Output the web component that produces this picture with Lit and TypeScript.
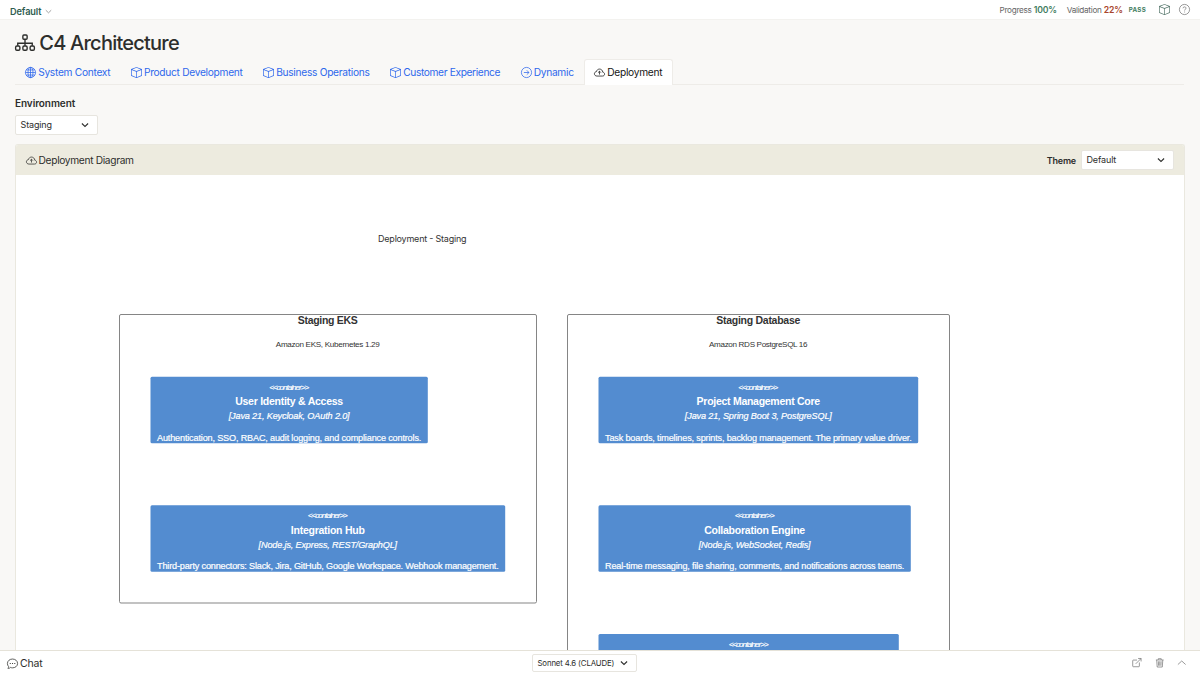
import { LitElement, html, css, svg } from "lit";
import { customElement } from "lit/decorators.js";

const glyphs: Record<string, unknown> = {
  box: svg`<path fill="currentColor" d="M8.186 1.113a.5.5 0 0 0-.372 0L1.846 3.5 8 5.961 14.154 3.5zM15 4.239l-6.5 2.6v7.922l6.5-2.6V4.24zM7.5 14.762V6.838L1 4.239v7.923zM7.443.184a1.5 1.5 0 0 1 1.114 0l7.129 2.852A.5.5 0 0 1 16 3.5v8.662a1 1 0 0 1-.629.928l-7.185 2.874a.5.5 0 0 1-.372 0L.63 13.09a1 1 0 0 1-.63-.928V3.5a.5.5 0 0 1 .314-.464z"/>`,
  globe: svg`<circle cx="8" cy="8" r="7.4"/><ellipse cx="8" cy="8" rx="3.6" ry="7.4"/><path d="M8 .6v14.8M.6 8h14.8M1.7 4.3h12.6M1.7 11.7h12.6"/>`,
  arrow: svg`<circle cx="8" cy="8" r="7.4"/><path d="M4.2 8h7.4M8.4 4.8 11.6 8l-3.2 3.2"/>`,
  cloud: svg`<path d="M4.3 13.2h8c1.8 0 3.1-1.2 3.1-2.8 0-1.5-1.1-2.7-2.7-2.9C12.5 4.8 10.5 3 8 3 5.9 3 4 4.4 3.7 6.6 1.8 6.9.6 8.2.6 9.9c0 1.9 1.6 3.3 3.7 3.3z"/><path d="M8 11V6.3M5.9 8.2 8 6.1l2.1 2.1"/>`,
  tree: svg`<rect x="6.3" y="1.6" width="3.4" height="3.4" rx=".8"/><path d="M8 5v5.2M2.2 10.2V8.2h11.6v2"/><rect x=".5" y="10.4" width="3.4" height="3.4" rx="1"/><rect x="6.3" y="10.4" width="3.4" height="3.4" rx="1"/><rect x="12.1" y="10.4" width="3.4" height="3.4" rx="1"/>`,
  help: svg`<circle cx="8" cy="8" r="7.4"/><path d="M5.8 6.2C5.9 4.9 6.8 4.2 8 4.2c1.3 0 2.2.8 2.2 1.9 0 1.5-2.1 1.7-2.1 3.4M8.1 11v1.3"/>`,
  chat: svg`<path d="M3.5 14.8c-.7.3-1.6.4-2.2.3.7-.8 1-1.7 1-2.7C1.2 11.2.6 9.7.6 8 .6 4.3 3.9 1.5 8 1.5S15.4 4.3 15.4 8 12.1 14.3 8 14.3c-1.2 0-2.2-.2-3.1-.6z"/><path stroke-width="1.7" stroke-linecap="round" d="M4.7 8h.1M8 8h.1M11.3 8h.1"/>`,
  chevron: svg`<path d="m1.8 5 6.2 6 6.2-6"/>`,
  up: svg`<path d="m1.5 11 6.5-6 6.5 6"/>`,
  open: svg`<path d="M8.5 3.5H2.2c-.6 0-1 .4-1 1v9.2c0 .6.4 1 1 1h9.2c.6 0 1-.4 1-1V7.5M10.3.8h5v5M15.2.9 6.3 9.8"/>`,
  trash: svg`<path d="M1.5 3.3h13M5.5 3V1.2h5V3M2.9 3.5l.8 11.7h8.6l.8-11.7M5.7 5.5l.3 7.5M8 5.5V13M10.3 5.5 10 13"/>`,
};

const icon = (name: string, cls: string) =>
  html`<svg class="icon ${cls}" viewBox="0 0 16 16" aria-hidden="true">${glyphs[name]}</svg>`;

const tabs = [
  { icon: "globe", label: "System Context", cls: "" },
  { icon: "box", label: "Product Development", cls: "" },
  { icon: "box", label: "Business Operations", cls: "" },
  { icon: "box", label: "Customer Experience", cls: "tight" },
  { icon: "arrow", label: "Dynamic", cls: "" },
  { icon: "cloud", label: "Deployment", cls: "active" },
];

interface Box { x: number; y: number; w: number; name: string; nameW: number; tech: string; techW: number; desc: string }

const boxes: Box[] = [
  { x: 150.5, y: 376.7, w: 277.3, name: "User Identity & Access", nameW: 108, tech: "[Java 21, Keycloak, OAuth 2.0]", techW: 121, desc: "Authentication, SSO, RBAC, audit logging, and compliance controls." },
  { x: 150.5, y: 505.3, w: 354.7, name: "Integration Hub", nameW: 74, tech: "[Node.js, Express, REST/GraphQL]", techW: 138.5, desc: "Third-party connectors: Slack, Jira, GitHub, Google Workspace. Webhook management." },
  { x: 598.5, y: 376.7, w: 319.7, name: "Project Management Core", nameW: 123.5, tech: "[Java 21, Spring Boot 3, PostgreSQL]", techW: 147, desc: "Task boards, timelines, sprints, backlog management. The primary value driver." },
  { x: 598.5, y: 505.3, w: 312.3, name: "Collaboration Engine", nameW: 101, tech: "[Node.js, WebSocket, Redis]", techW: 112, desc: "Real-time messaging, file sharing, comments, and notifications across teams." },
  { x: 598.5, y: 634, w: 300.3, name: "", nameW: 0, tech: "", techW: 0, desc: "" },
];

const label = (x: number, y: number, cls: string, text: string, width: number) =>
  svg`<text x=${x} y=${y} class=${cls} textLength=${width} lengthAdjust="spacing">${text}</text>`;

@customElement("app-root")
export class AppRoot extends LitElement {
  static styles = css`
    :host { display: flex; flex-direction: column; width: 1200px; height: 675px; overflow: hidden; box-sizing: border-box; background: #f9f8f6; color: #2d2e2c; font-family: Inter, "Liberation Sans", sans-serif; font-size: 10px; }
    * { box-sizing: border-box; }
    .icon { display: block; flex: none; width: 11px; height: 11px; fill: none; stroke: currentColor; stroke-width: 1.1; overflow: visible; }
    .icon path[fill] { stroke: none; }
    .topbar { display: flex; align-items: center; flex: none; height: 20px; padding: 0 10px; background: #fff; border-bottom: 1px solid #f3f2ef; white-space: nowrap; }
    .project { display: flex; align-items: center; gap: 4px; color: #2f5d50; font-size: 9.2px; font-weight: 600; letter-spacing: -.1px; padding-top: 3px; }
    .project .icon { width: 7px; height: 7px; stroke: #888; stroke-width: 1.8; }
    .stats { display: flex; align-items: center; margin-left: auto; color: #666; font-size: 8.2px; letter-spacing: -.3px; }
    .stats b { font-weight: 600; font-size: 8.7px; margin-left: 2.3px; letter-spacing: -.25px; }
    .good { color: #3f7d60; }
    .bad { color: #a8452c; }
    .validation { margin-left: 10px; }
    .pass { margin-left: 6px; font-size: 6.2px; font-weight: 700; letter-spacing: .3px; }
    .stats .box { margin-left: 13px; color: #55766b; }
    .stats .help { margin-left: 9px; color: #777; }
    .title { display: flex; align-items: center; flex: none; gap: 4.3px; height: 39px; margin: 0; padding: 6px 15px 0; font-size: 20px; font-weight: 500; letter-spacing: -.77px; }
    .title .icon { width: 20px; height: 20px; stroke-width: 1.1; }
    .tabs { display: flex; flex: none; height: 26px; margin: 0 16px 0 15px; border-bottom: 1px solid #eeece8; white-space: nowrap; }
    .tab { display: flex; align-items: center; gap: 1.8px; height: 26px; padding: 0 9.4px 1px; border: 1px solid transparent; border-bottom: 0; color: #2e68ec; font-size: 10.2px; letter-spacing: -.29px; }
    .tight { letter-spacing: -.36px; }
    .active { background: #fff; border-color: #eeece8; border-radius: 3px 3px 0 0; color: #151515; }
    .env { display: flex; flex-direction: column; flex: none; gap: 5px; padding: 12px 15px 9px; align-items: flex-start; height: 59px; }
    .env-label { font-size: 10px; line-height: 13px; font-weight: 600; letter-spacing: -.08px; }
    .select { display: flex; align-items: center; justify-content: space-between; height: 20px; padding: 0 8px 1px 4.5px; border: 1px solid #e7e5df; border-radius: 2px; background: #fff; font-size: 9px; letter-spacing: -.13px; white-space: nowrap; }
    .select .icon { width: 8px; height: 8px; stroke-width: 2.1; }
    .env .select { width: 83px; }
    .card { display: flex; flex-direction: column; flex: 1; min-height: 0; margin: 0 15px; border: 1px solid #eae8df; border-bottom: 0; border-radius: 3px 3px 0 0; background: #fff; overflow: hidden; }
    .head { display: flex; align-items: center; flex: none; height: 30px; padding: 0 10px; background: #edebdf; }
    .head-title { display: flex; align-items: center; gap: 1.6px; font-size: 10.2px; letter-spacing: -.33px; }
    .theme { margin-left: auto; margin-right: 5px; font-size: 9px; font-weight: 600; letter-spacing: -.2px; }
    .head .select { width: 93px; }
    .canvas { display: block; width: 1168px; height: 475px; flex: none; font-family: "Liberation Sans", Arial, sans-serif; }
    .canvas text { text-anchor: middle; fill: #333; }
    .canvas .caption { font: 9px Inter, sans-serif; }
    .node-title { font-size: 10.5px; font-weight: 700; }
    .node-tech { font-size: 8.1px; }
    .frame { fill: none; stroke: #858585; stroke-width: 1; }
    .container { fill: #538cd0; }
    .canvas .stereo { fill: #fff; font-size: 8.1px; font-style: italic; stroke: #fff; stroke-width: .15; }
    .canvas .name { fill: #fff; font-size: 10.5px; font-weight: 700; }
    .canvas .tech { fill: #fff; font-size: 9.1px; font-style: italic; stroke: #fff; stroke-width: .2; }
    .canvas .desc { fill: #fff; font-size: 9.1px; stroke: #fff; stroke-width: .2; }
    .chatbar { display: grid; grid-template-columns: 532px 105px 1fr; align-items: center; flex: none; height: 25px; padding: 0 13.5px 0 0; background: #fff; border-top: 1px solid #e5e2d8; }
    .chat { display: flex; align-items: center; gap: 2px; padding-left: 7px; font-size: 10.5px; letter-spacing: -.2px; }
    .model { font-size: 7.8px; height: 18px; }
    .actions { display: flex; justify-content: flex-end; gap: 13px; color: #666; }
    .actions .icon { width: 9.5px; height: 9.5px; }
  `;

  renderBox(b: Box) {
    const cx = b.x + b.w / 2;
    return svg`
      <rect class="container" x=${b.x} y=${b.y} width=${b.w} height="66.5" rx="1.5"/>
      ${label(cx, b.y + 12.9, "stereo", "<<container>>", 40)}
      ${b.name
        ? svg`${label(cx, b.y + 28.5, "name", b.name, b.nameW)}
          ${label(cx, b.y + 42.5, "tech", b.tech, b.techW)}
          ${label(cx, b.y + 63.9, "desc", b.desc, b.w - 13)}`
        : ""}`;
  }

  render() {
    return html`
      <header class="topbar">
        <div class="project">Default ${icon("chevron", "")}</div>
        <div class="stats">
          <span>Progress<b class="good">100%</b></span>
          <span class="validation">Validation<b class="bad">22%</b></span>
          <span class="pass good">PASS</span>
          ${icon("box", "box")}${icon("help", "help")}
        </div>
      </header>
      <h1 class="title">${icon("tree", "")}<span>C4 Architecture</span></h1>
      <nav class="tabs">
        ${tabs.map((t) => html`<a class="tab ${t.cls}">${icon(t.icon, "")}<span>${t.label}</span></a>`)}
      </nav>
      <section class="env">
        <span class="env-label">Environment</span>
        <div class="select"><span>Staging</span>${icon("chevron", "")}</div>
      </section>
      <main class="card">
        <div class="head">
          <div class="head-title">${icon("cloud", "")}<span>Deployment Diagram</span></div>
          <span class="theme">Theme</span>
          <div class="select"><span>Default</span>${icon("chevron", "")}</div>
        </div>
        <svg class="canvas" viewBox="16 175 1168 475">
          ${label(422.3, 241.6, "caption", "Deployment - Staging", 88.5)}
          <rect class="frame" x="119.5" y="314.5" width="417" height="288.5" rx="1.5"/>
          <rect class="frame" x="567.5" y="314.5" width="382" height="420" rx="1.5"/>
          ${label(327.8, 324, "node-title", "Staging EKS", 60)}
          ${label(327.8, 347, "node-tech", "Amazon EKS, Kubernetes 1.29", 104)}
          ${label(758.3, 324, "node-title", "Staging Database", 84)}
          ${label(758.3, 347, "node-tech", "Amazon RDS PostgreSQL 16", 98.5)}
          ${boxes.map((b) => this.renderBox(b))}
        </svg>
      </main>
      <footer class="chatbar">
        <div class="chat">${icon("chat", "")}<span>Chat</span></div>
        <div class="select model"><span>Sonnet 4.6 (CLAUDE)</span>${icon("chevron", "")}</div>
        <div class="actions">${icon("open", "")}${icon("trash", "")}${icon("up", "")}</div>
      </footer>
    `;
  }
}
